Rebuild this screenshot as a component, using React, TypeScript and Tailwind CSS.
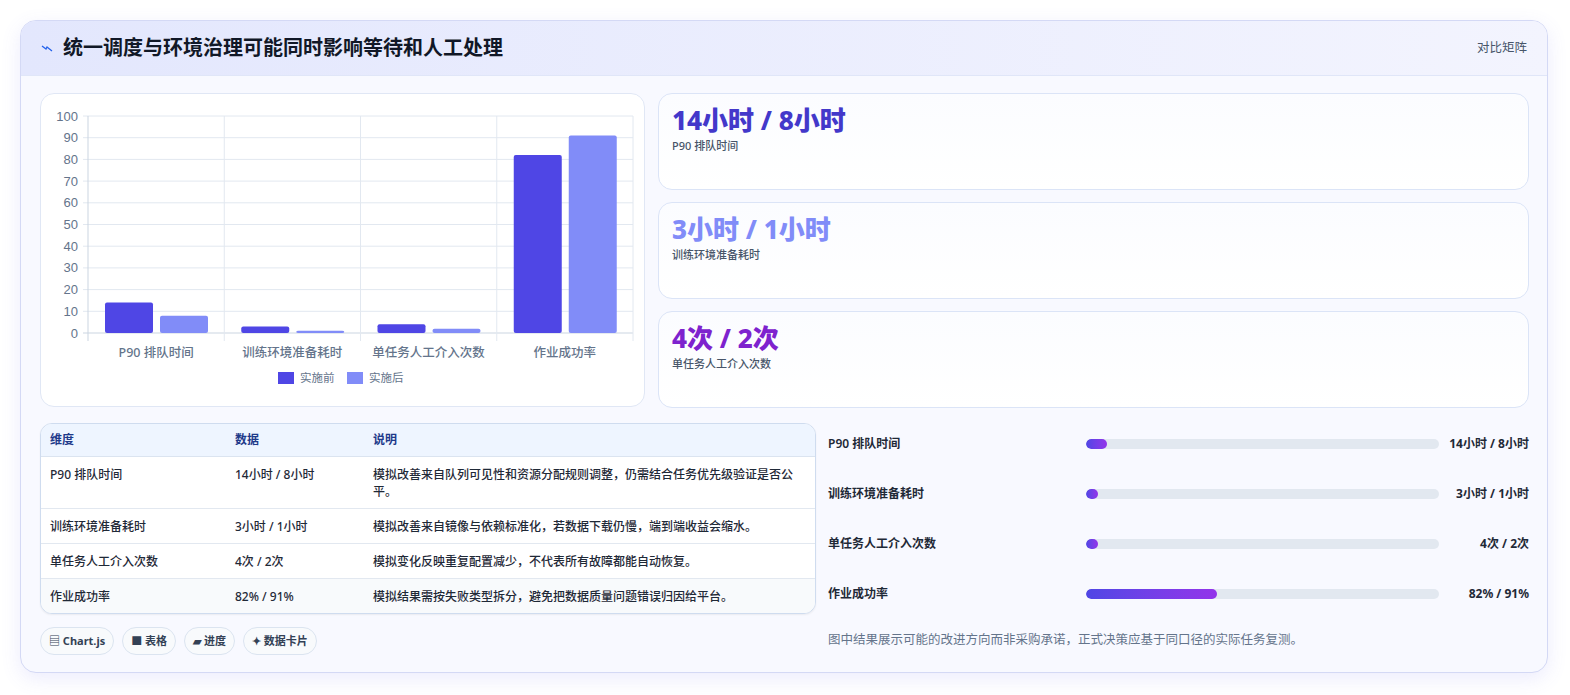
import React from "react";

const F = { fontFamily: '"Noto Sans", "Noto Sans CJK SC", sans-serif' };
const cats = ["P90 排队时间", "训练环境准备耗时", "单任务人工介入次数", "作业成功率"];
const before = [14, 3, 4, 82];
const after = [8, 1, 2, 91];

function Chart() {
  const zero = 239, top = 22, left = 47, right = 592;
  const s = (zero - top) / 100;
  const cw = (right - left) / 4;
  return (
    <svg width="604" height="313" className="block">
      {Array.from({ length: 11 }).map((_, i) => {
        const y = zero - i * 10 * s;
        return (
          <g key={i}>
            <line x1={42} x2={right} y1={y} y2={y} stroke={i === 0 ? "#cbd5e1" : "#e2e8f0"} strokeWidth="1" />
            <text x={37} y={y + 4.5} textAnchor="end" fontSize="13" fill="#64748b" fontFamily="Liberation Sans, sans-serif">{i * 10}</text>
          </g>
        );
      })}
      {[0, 1, 2, 3, 4].map((i) => (
        <line key={i} x1={left + cw * i} x2={left + cw * i} y1={top} y2={zero + 8} stroke={i === 0 ? "#cbd5e1" : "#e2e8f0"} />
      ))}
      {cats.map((c, i) => {
        const st = left + cw * i;
        const hb = before[i] * s, ha = after[i] * s;
        return (
          <g key={c}>
            <rect x={st + 17} y={zero - hb} width={48} height={hb} rx={2} fill="#4f46e5" />
            <rect x={st + 72} y={zero - ha} width={48} height={ha} rx={2} fill="#818cf8" />
            <text x={st + cw / 2} y={263} textAnchor="middle" fontSize="12.5" fontWeight="500" fill="#64748b" style={F}>{c}</text>
          </g>
        );
      })}
      <rect x={237} y={278} width={16} height={12} fill="#4f46e5" />
      <text x={259} y={288} fontSize="11.5" fill="#64748b" style={F}>实施前</text>
      <rect x={306} y={278} width={16} height={12} fill="#818cf8" />
      <text x={328} y={288} fontSize="11.5" fill="#64748b" style={F}>实施后</text>
    </svg>
  );
}

const cards = [
  { v: "14小时 / 8小时", l: "P90 排队时间", c: "text-[#4338ca]" },
  { v: "3小时 / 1小时", l: "训练环境准备耗时", c: "text-[#818cf8]" },
  { v: "4次 / 2次", l: "单任务人工介入次数", c: "text-[#7e22ce]" },
];

const rows = [
  ["P90 排队时间", "14小时 / 8小时", "模拟改善来自队列可见性和资源分配规则调整，仍需结合任务优先级验证是否公平。"],
  ["训练环境准备耗时", "3小时 / 1小时", "模拟改善来自镜像与依赖标准化，若数据下载仍慢，端到端收益会缩水。"],
  ["单任务人工介入次数", "4次 / 2次", "模拟变化反映重复配置减少，不代表所有故障都能自动恢复。"],
  ["作业成功率", "82% / 91%", "模拟结果需按失败类型拆分，避免把数据质量问题错误归因给平台。"],
];

const bars = [
  ["P90 排队时间", "14小时 / 8小时", 6],
  ["训练环境准备耗时", "3小时 / 1小时", 3.5],
  ["单任务人工介入次数", "4次 / 2次", 3.5],
  ["作业成功率", "82% / 91%", 37],
] as const;

export default function App() {
  return (
    <div className="w-[1570px] h-[695px] bg-white pt-[20px] pl-[20px]" style={F}>
      <div className="w-[1528px] h-[653px] rounded-[16px] border border-[#d4d9f5] bg-[#f8f9ff] shadow-[0_6px_20px_rgba(99,102,241,0.12)] overflow-hidden flex flex-col">
        <div className="h-[55px] shrink-0 flex items-center justify-between px-[20px] bg-gradient-to-r from-[#e3e7fd] to-[#f3f4fe] border-b border-[#e0e6f8]">
          <div className="flex items-center gap-[10px]">
            <svg width="12" height="8" viewBox="0 0 12 8"><path d="M1 2 L5 5 L6 3 L11 7" fill="none" stroke="#2563eb" strokeWidth="1.3" /></svg>
            <span className="text-[20px] font-bold text-[#111827]">统一调度与环境治理可能同时影响等待和人工处理</span>
          </div>
          <span className="text-[12.5px] text-[#475569]">对比矩阵</span>
        </div>
        <div className="flex-1 pl-[19px] pr-[18px] pt-[17px] flex flex-col">
          <div className="flex gap-[13px]">
            <div className="w-[605px] h-[314px] rounded-[14px] bg-white border border-[#e0e7f5]">
              <Chart />
            </div>
            <div className="flex-1 flex flex-col gap-[12px]">
              {cards.map((c) => (
                <div key={c.l} className="h-[97px] rounded-[14px] border border-[#dbe4f7] bg-gradient-to-b from-[#fbfcff] to-white px-[13px] pt-[9px]">
                  <div className={`text-[26px] font-extrabold leading-[34px] ${c.c}`}>{c.v}</div>
                  <div className="text-[11px] font-medium text-[#475569] mt-[1px]">{c.l}</div>
                </div>
              ))}
            </div>
          </div>
          <div className="flex gap-[12px] mt-[15px]">
            <div className="w-[776px]">
              <div className="rounded-[12px] border border-[#cfdcef] bg-white overflow-hidden text-[12px] shadow-[0_1px_2px_rgba(0,0,0,0.06)]">
                <div className="flex h-[33px] items-center bg-[#eef5ff] border-b border-[#dbe4f0] text-[#1e3a8a] font-semibold">
                  <div className="w-[194px] pl-[9px]">维度</div>
                  <div className="w-[138px]">数据</div>
                  <div className="flex-1">说明</div>
                </div>
                {rows.map((r, i) => (
                  <div key={r[0]} className={`flex py-[8.5px] ${i < 3 ? "border-b border-[#e2e8f0]" : ""} text-[#1f2937] font-medium leading-[17px] ${i === 3 ? "bg-[#f8fafc]" : ""}`}>
                    <div className="w-[194px] pl-[9px]">{r[0]}</div>
                    <div className="w-[138px]">{r[1]}</div>
                    <div className="flex-1 pr-[14px]">{r[2]}</div>
                  </div>
                ))}
              </div>
              <div className="flex gap-[8px] mt-[13px]">
                {["▤ Chart.js", "■ 表格", "▰ 进度", "✦ 数据卡片"].map((p) => (
                  <span key={p} className="h-[28px] px-[8px] flex items-center rounded-full border border-[#dbe4f0] bg-[#f8fafc] text-[11px] font-bold text-[#334155]">{p}</span>
                ))}
              </div>
            </div>
            <div className="flex-1 pt-[11px]">
              {bars.map(([l, v, p]) => (
                <div key={l} className="h-[50px] flex items-start gap-[10px]">
                  <div className="w-[248px] text-[12px] font-semibold text-[#1f2937] leading-[20px]">{l}</div>
                  <div className="flex-1 h-[10px] mt-[5px] rounded-full bg-[#e2e8f0] overflow-hidden">
                    <div className="h-full rounded-full bg-gradient-to-r from-[#4f46e5] to-[#9333ea]" style={{ width: `${p}%` }} />
                  </div>
                  <div className="w-[80px] text-right text-[12px] font-bold text-[#1f2937] leading-[20px]">{v}</div>
                </div>
              ))}
              <div className="text-[12.5px] text-[#64748b] mt-[-3px]">图中结果展示可能的改进方向而非采购承诺，正式决策应基于同口径的实际任务复测。</div>
            </div>
          </div>
        </div>
      </div>
    </div>
  );
}
